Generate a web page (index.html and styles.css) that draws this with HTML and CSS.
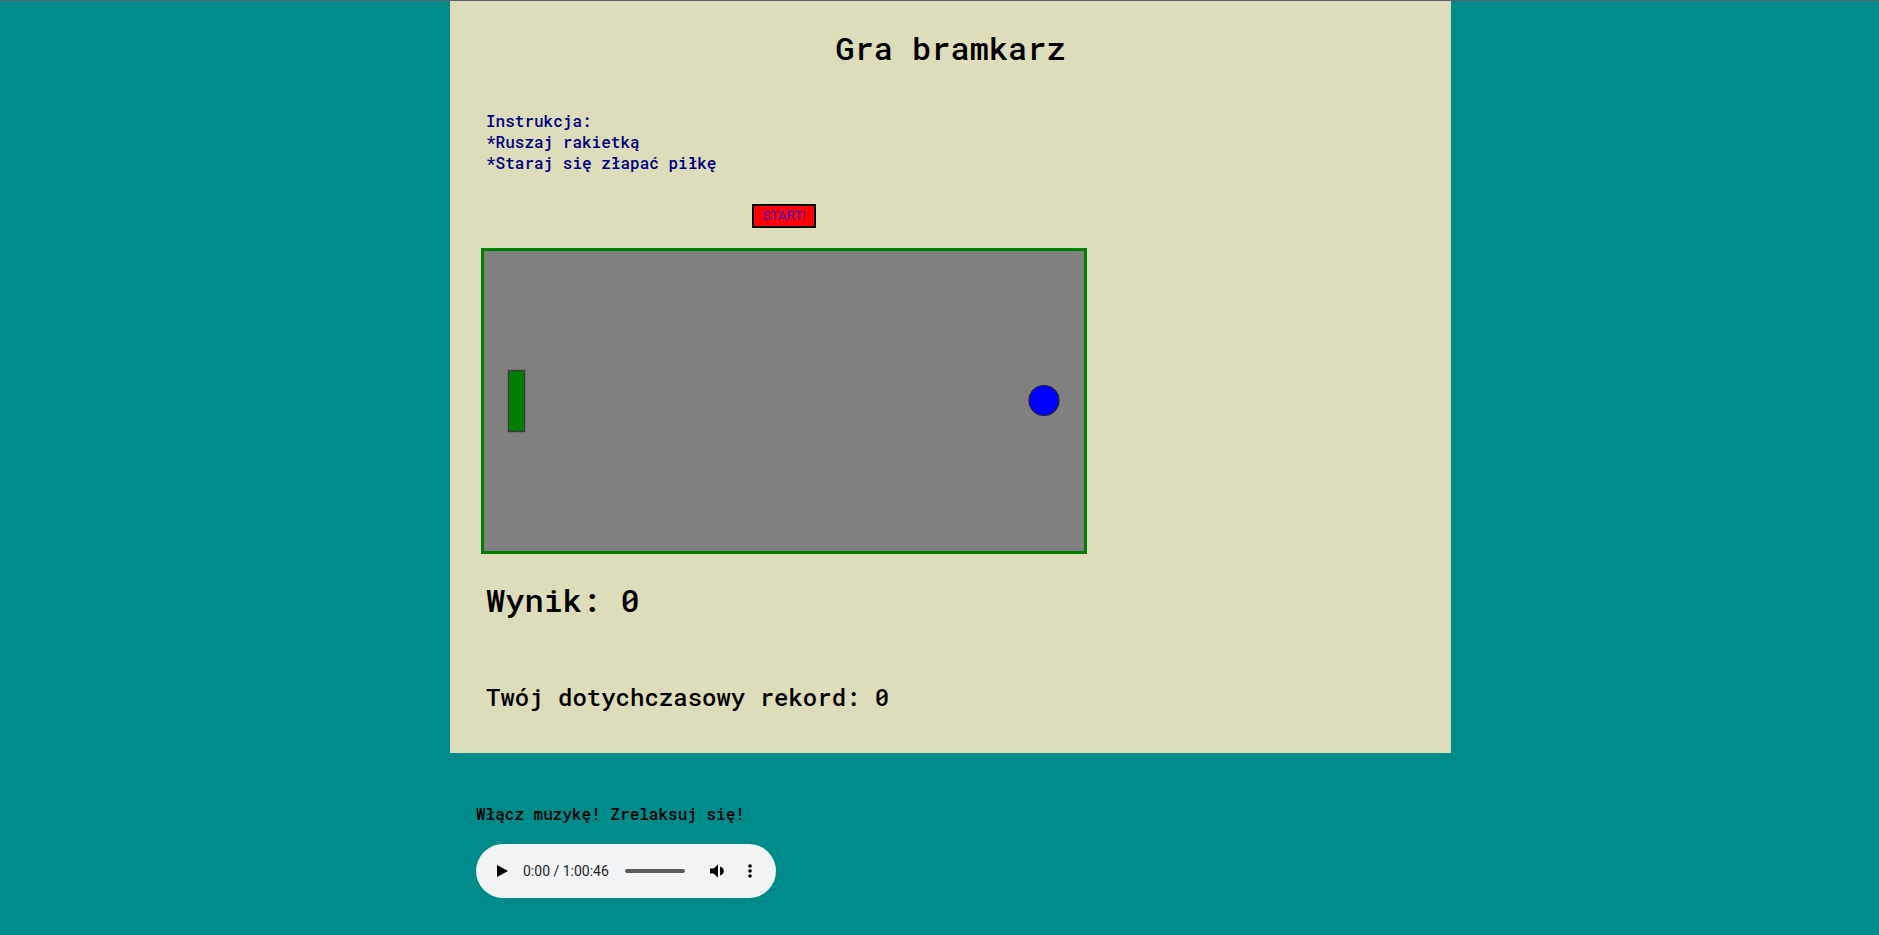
FILE: index.html
```html
<!DOCTYPE html>
<html lang="pl">
<head>
<meta charset="utf-8">
<title>Gra bramkarz</title>
<link rel="stylesheet" href="styles.css">
</head>
<body>
<main class="board">
  <h1 class="title">Gra bramkarz</h1>
  <div class="game">
    <p class="instr">Instrukcja:<br>*Ruszaj rakietką<br>*Staraj się złapać piłkę</p>
    <div class="start-row"><button class="start" type="button">START!</button></div>
    <div class="field">
      <svg class="field-svg" width="600" height="300" viewBox="0 0 600 300">
        <rect x="24.5" y="119.5" width="16" height="61" fill="#008000" stroke="#3a3a3a" stroke-width="1.4"/>
        <circle cx="560" cy="149.5" r="15" fill="#0000ff" stroke="#222" stroke-width="1.2"/>
      </svg>
    </div>
    <h2 class="score">Wynik: 0</h2>
    <h3 class="record">Twój dotychczasowy rekord: 0</h3>
  </div>
</main>
<section class="music">
  <p class="music-text">Włącz muzykę! Zrelaksuj się!</p>
  <div class="player">
    <svg class="play" width="11" height="12" viewBox="0 0 11 12"><path d="M0 0L11 6L0 12Z" fill="#000"/></svg>
    <span class="time">0:00 / 1:00:46</span>
    <div class="track"></div>
    <svg class="vol" width="16" height="14" viewBox="0 0 16 14"><path d="M0 4.5H3.5L8 0.5V13.5L3.5 9.5H0Z" fill="#000"/><path d="M10 2.6C12.4 3.4 13.8 5 13.8 7S12.4 10.6 10 11.4Z" fill="#000"/></svg>
    <svg class="more" width="4" height="14" viewBox="0 0 4 14"><circle cx="2" cy="2" r="1.8" fill="#000"/><circle cx="2" cy="7" r="1.8" fill="#000"/><circle cx="2" cy="12" r="1.8" fill="#000"/></svg>
  </div>
</section>
</body>
</html>
```

FILE: styles.css
```css
html {
  background: #008b8b;
}

body {
  margin: 0;
  border-top: 1px solid #5f6368;
  background: #008b8b;
  font-family: "Roboto Mono", "DejaVu Sans Mono", monospace;
  font-weight: 500;
  color: #000;
}

.board {
  width: 1001px;
  margin-left: 450px;
  background: #dddcbb;
  padding: 27px 0 41px 0;
  box-sizing: border-box;
}

.title {
  margin: 0;
  font-size: 32px;
  line-height: 40px;
  font-weight: 500;
  text-align: center;
}

.game {
  padding-left: 31px;
}

.instr {
  margin: 42px 0 0;
  padding-left: 5px;
  font-size: 16px;
  line-height: 21px;
  color: #000080;
}

.start-row {
  width: 606px;
  margin-top: 31px;
  height: 24px;
  text-align: center;
}

.start {
  width: 64px;
  height: 24px;
  margin: 0;
  padding: 0;
  border: 2px solid #000;
  background: #ff0000;
  color: #3a10c8;
  font-family: Roboto, "Liberation Sans", sans-serif;
  font-size: 13.33px;
  font-weight: 400;
  line-height: 20px;
  vertical-align: top;
}

.field {
  margin-top: 20px;
  width: 600px;
  height: 300px;
  border: 3px solid #008000;
  background: #808080;
}

.field-svg {
  display: block;
}

.score {
  margin: 26px 0 0;
  padding-left: 5px;
  font-size: 32px;
  line-height: 40px;
  font-weight: 500;
}

.record {
  margin: 62px 0 0;
  padding-left: 5px;
  font-size: 24px;
  line-height: 30px;
  font-weight: 500;
}

.music {
  margin-left: 476px;
  padding-top: 51px;
}

.music-text {
  margin: 0;
  font-size: 16px;
  line-height: 20px;
}

.player {
  margin-top: 20px;
  width: 300px;
  height: 54px;
  border-radius: 27px;
  background: #f1f3f4;
  display: flex;
  align-items: center;
  padding-left: 21px;
  box-sizing: border-box;
}

.play {
  display: block;
  flex: none;
}

.time {
  margin-left: 15px;
  font-family: Roboto, "Liberation Sans", sans-serif;
  font-size: 14px;
  font-weight: 400;
  color: #1f1f1f;
  white-space: nowrap;
  width: 85px;
}

.track {
  margin-left: 17px;
  width: 60px;
  height: 4px;
  border-radius: 2px;
  background: #5b5b5b;
  flex: none;
}

.vol {
  display: block;
  margin-left: 25px;
  flex: none;
}

.more {
  display: block;
  margin-left: 22px;
  flex: none;
}
```
